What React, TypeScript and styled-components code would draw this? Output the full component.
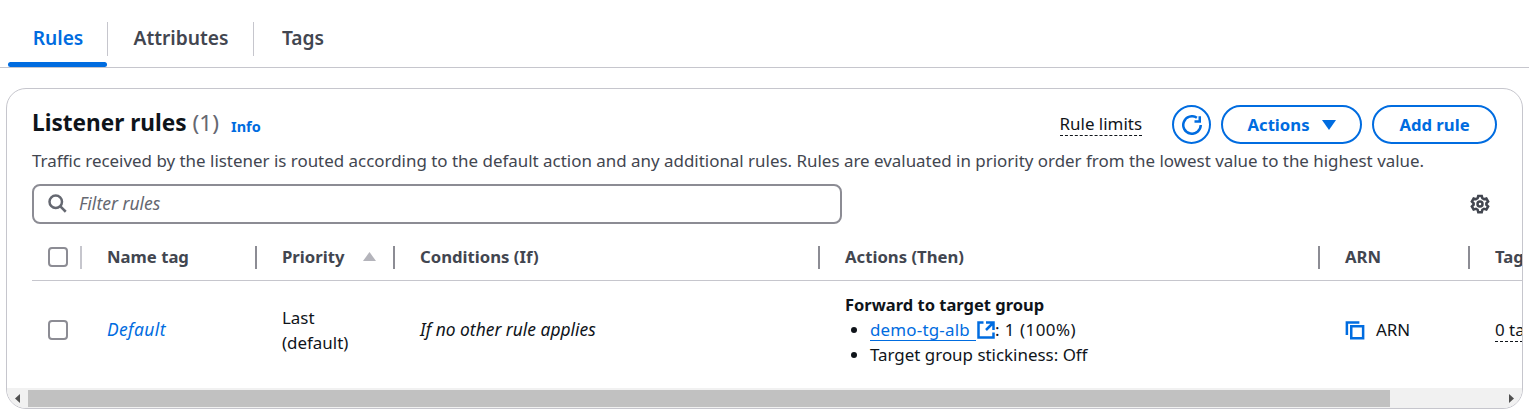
import styled, { createGlobalStyle } from "styled-components";

const GlobalStyle = createGlobalStyle`
  html, body {
    margin: 0;
    padding: 0;
    background: #fff;
    overflow: hidden;
  }
  body {
    font-family: "Noto Sans", "Open Sans", sans-serif;
    font-size: 16.93px;
    line-height: 25px;
    color: #0f141a;
  }
`;

const BLUE = "#006ce0";

// tabs
const TabBar = styled.div`
  display: flex;
  height: 68px;
  padding: 22px 0 0 8px;
  box-sizing: border-box;
  border-bottom: 1px solid #c6c6cd;
`;

const Tab = styled.div<{ $active?: boolean; $width: number; $divider?: boolean }>`
  position: relative;
  width: ${({ $width }) => $width}px;
  height: 45px;
  box-sizing: border-box;
  padding-top: 3px;
  font-size: 19.2px;
  font-weight: 600;
  line-height: 26px;
  text-align: center;
  color: ${({ $active }) => ($active ? BLUE : "#424650")};
  &::before {
    content: "";
    display: ${({ $divider }) => ($divider ? "block" : "none")};
    position: absolute;
    right: 0;
    top: 0;
    width: 1px;
    height: 34px;
    background: #c6c6cd;
  }
  &::after {
    content: "";
    display: ${({ $active }) => ($active ? "block" : "none")};
    position: absolute;
    left: 0;
    right: 1px;
    bottom: 0;
    height: 5px;
    border-radius: 3px;
    background: ${BLUE};
  }
`;

// card
const Card = styled.section`
  margin: 20px 0 0 6px;
  width: 1517px;
  height: 321px;
  box-sizing: border-box;
  border: 1px solid #c6c6cd;
  border-radius: 20px;
  overflow: hidden;
  display: flex;
  flex-direction: column;
`;

const Header = styled.div`
  padding: 16px 25px 0 25px;
`;

const TitleRow = styled.div`
  display: flex;
  align-items: center;
  height: 39px;
`;

const Title = styled.h2`
  margin: -3px 0 0;
  font-size: 22.6px;
  font-weight: 700;
  line-height: 36px;
`;

const Count = styled.span`
  font-weight: 400;
  color: #656871;
  margin-left: 6px;
`;

const InfoLink = styled.span`
  margin-left: 12px;
  margin-top: 3px;
  font-size: 14.5px;
  font-weight: 700;
  color: ${BLUE};
`;

const Spacer = styled.div`
  flex: 1;
`;

const DashedText = styled.span`
  border-bottom: 1px dashed #0f141a;
  line-height: 22px;
`;

const RuleLimits = styled(DashedText)`
  margin-right: 20px;
`;

const PillButton = styled.div<{ $width: number }>`
  display: flex;
  align-items: center;
  justify-content: center;
  gap: 12px;
  width: ${({ $width }) => $width}px;
  height: 39px;
  margin-left: 10px;
  box-sizing: border-box;
  border: 2px solid ${BLUE};
  border-radius: 20px;
  color: ${BLUE};
  font-size: 16.7px;
  font-weight: 700;
`;

const Description = styled.p`
  margin: 4px 0 0;
  color: #424650;
  line-height: 26px;
  white-space: nowrap;
`;

const FilterRow = styled.div`
  display: flex;
  align-items: center;
  justify-content: space-between;
  margin-top: 10px;
  padding-right: 7px;
`;

const FilterBox = styled.div`
  display: flex;
  align-items: center;
  gap: 12px;
  width: 810px;
  height: 40px;
  box-sizing: border-box;
  border: 2px solid #8c8c94;
  border-radius: 8px;
  padding: 0 0 2px 13px;
  color: #656871;
  font-size: 17.5px;
  font-style: italic;
`;

const TableWrap = styled.div`
  flex: 1;
  margin-left: 25px;
  overflow: hidden;
`;

const Table = styled.table`
  border-collapse: collapse;
  table-layout: fixed;
  width: 1690px;
`;

const HeadCell = styled.th<{ $divider?: string }>`
  position: relative;
  height: 56px;
  padding: 10px 0 0 25px;
  box-sizing: border-box;
  text-align: left;
  font-size: 16.7px;
  font-weight: 700;
  color: #424650;
  border-bottom: 1px solid #c6c6cd;
  &::after {
    content: "";
    position: absolute;
    right: 0;
    top: 22px;
    width: 2px;
    height: 23px;
    background: ${({ $divider }) => $divider ?? "#8c8c94"};
  }
`;

const CheckHead = styled(HeadCell)`
  padding-left: 16px;
`;

const BodyCell = styled.td`
  height: 107px;
  padding: 0 0 8px 25px;
  box-sizing: border-box;
  vertical-align: middle;
`;

const CheckCell = styled(BodyCell)`
  padding-left: 16px;
`;

const Checkbox = styled.div`
  width: 20px;
  height: 20px;
  box-sizing: border-box;
  border: 2px solid #8c8c94;
  border-radius: 4px;
`;

const SortLabel = styled.div`
  display: flex;
  align-items: center;
  gap: 19px;
`;

const ItalicLink = styled.span`
  font-size: 17.4px;
  font-style: italic;
  letter-spacing: 0.4px;
  color: ${BLUE};
`;

const Italic = styled.span`
  font-size: 17.4px;
  font-style: italic;
`;

const Strong = styled.div`
  font-size: 16.5px;
  font-weight: 700;
`;

const ActionList = styled.ul`
  margin: 0;
  padding-left: 25px;
`;

const TargetLink = styled.span`
  color: ${BLUE};
  border-bottom: 1px solid ${BLUE};
  padding-right: 6px;
  line-height: 20px;
  display: inline-block;
  letter-spacing: 0.2px;
`;

const LinkIcon = styled.span`
  display: inline-block;
  color: ${BLUE};
  margin-right: -1px;
  vertical-align: -4px;
`;

const Weight = styled.span`
  letter-spacing: 0.5px;
`;

const ArnCell = styled.div`
  display: flex;
  align-items: center;
  gap: 11px;
`;

const TagCount = styled(DashedText)`
  white-space: nowrap;
`;

// scrollbar
const ScrollTrack = styled.div`
  display: flex;
  align-items: center;
  height: 20px;
  background: #f1f1f1;
  flex-shrink: 0;
`;

const ScrollArrow = styled.div`
  width: 21px;
  height: 18px;
  display: flex;
  align-items: center;
  justify-content: center;
  flex-shrink: 0;
`;

const ScrollRest = styled.div`
  flex: 1;
`;

const ScrollThumb = styled.div`
  width: 1362px;
  height: 17px;
  background: #c1c1c1;
`;

const Icon = styled.svg<{ $size: number; $color?: string }>`
  display: block;
  flex-shrink: 0;
  width: ${({ $size }) => $size}px;
  height: ${({ $size }) => $size}px;
  fill: none;
  stroke: ${({ $color }) => $color ?? "currentColor"};
  stroke-width: 2;
`;

const SolidIcon = styled.svg`
  display: block;
  fill: currentColor;
`;

const SortCaret = styled(SolidIcon)`
  width: 13px;
  height: 9px;
  color: #b4b4bb;
`;

const DownCaret = styled(SolidIcon)`
  width: 14px;
  height: 10px;
`;

const ArrowGlyph = styled(SolidIcon)`
  width: 5px;
  height: 9px;
  color: #505050;
`;

const columns = [50, 175, 138, 425, 500, 150, 252];

const App = () => {
  return (
    <>
      <GlobalStyle />
      <TabBar>
        <Tab $active $width={100} $divider>Rules</Tab>
        <Tab $width={146} $divider>Attributes</Tab>
        <Tab $width={98}>Tags</Tab>
      </TabBar>
      <Card>
        <Header>
          <TitleRow>
            <Title>
              Listener rules<Count>(1)</Count>
            </Title>
            <InfoLink>Info</InfoLink>
            <Spacer />
            <RuleLimits>Rule limits</RuleLimits>
            <PillButton $width={39}>
              <Icon $size={20} viewBox="0 0 16 16">
                <path d="M15 8a7 7 0 1 1-3.1-5.8" />
                <path d="M14.2 1v4.2H10" />
              </Icon>
            </PillButton>
            <PillButton $width={141}>
              Actions
              <DownCaret viewBox="0 0 14 10">
                <path d="M0 0h14L7 10z" />
              </DownCaret>
            </PillButton>
            <PillButton $width={125}>Add rule</PillButton>
          </TitleRow>
          <Description>
            Traffic received by the listener is routed according to the default action and any additional rules. Rules are evaluated in priority order from the lowest value to the highest value.
          </Description>
          <FilterRow>
            <FilterBox>
              <Icon $size={20} $color="#656871" viewBox="0 0 16 16">
                <circle cx="7" cy="7" r="5" />
                <path d="m15 15-4.5-4.5" />
              </Icon>
              Filter rules
            </FilterBox>
            <Icon $size={20} $color="#424650" viewBox="0 0 16 16">
              <path d="M6.6 1.5h2.8l.5 1.9 1.3.7 1.9-.5 1.4 2.4-1.4 1.4v1.2l1.4 1.4-1.4 2.4-1.9-.5-1.3.7-.5 1.9H6.6l-.5-1.9-1.3-.7-1.9.5-1.4-2.4 1.4-1.4V7.4L1.5 6l1.4-2.4 1.9.5 1.3-.7z" />
              <circle cx="8" cy="8" r="2" />
            </Icon>
          </FilterRow>
        </Header>
        <TableWrap>
          <Table>
            <colgroup>
              {columns.map((width, i) => (
                <col key={i} width={width} />
              ))}
            </colgroup>
            <thead>
              <tr>
                <CheckHead $divider="#c6c6cd">
                  <Checkbox />
                </CheckHead>
                <HeadCell>Name tag</HeadCell>
                <HeadCell>
                  <SortLabel>
                    Priority
                    <SortCaret viewBox="0 0 13 9">
                      <path d="M6.5 0 13 9H0z" />
                    </SortCaret>
                  </SortLabel>
                </HeadCell>
                <HeadCell>Conditions (If)</HeadCell>
                <HeadCell>Actions (Then)</HeadCell>
                <HeadCell>ARN</HeadCell>
                <HeadCell $divider="transparent">Tags</HeadCell>
              </tr>
            </thead>
            <tbody>
              <tr>
                <CheckCell>
                  <Checkbox />
                </CheckCell>
                <BodyCell>
                  <ItalicLink>Default</ItalicLink>
                </BodyCell>
                <BodyCell>
                  Last
                  <br />
                  (default)
                </BodyCell>
                <BodyCell>
                  <Italic>If no other rule applies</Italic>
                </BodyCell>
                <BodyCell>
                  <Strong>Forward to target group</Strong>
                  <ActionList>
                    <li>
                      <TargetLink>demo-tg-alb</TargetLink>
                      <LinkIcon>
                        <Icon $size={20} viewBox="0 0 16 16">
                          <path d="M14 8V2H8M14 2 8 8M6 2H2v12h12v-4" />
                        </Icon>
                      </LinkIcon>
                      <Weight>: 1 (100%)</Weight>
                    </li>
                    <li>Target group stickiness: Off</li>
                  </ActionList>
                </BodyCell>
                <BodyCell>
                  <ArnCell>
                    <Icon $size={20} $color={BLUE} viewBox="0 0 16 16">
                      <path d="M1.5 12V2h10" />
                      <path d="M5 5h9.5v9.5H5z" />
                    </Icon>
                    ARN
                  </ArnCell>
                </BodyCell>
                <BodyCell>
                  <TagCount>0 tags</TagCount>
                </BodyCell>
              </tr>
            </tbody>
          </Table>
        </TableWrap>
        <ScrollTrack>
          <ScrollArrow>
            <ArrowGlyph viewBox="0 0 5 9">
              <path d="M5 0v9L0 4.5z" />
            </ArrowGlyph>
          </ScrollArrow>
          <ScrollThumb />
          <ScrollRest />
          <ScrollArrow>
            <ArrowGlyph viewBox="0 0 5 9">
              <path d="M0 0v9l5-4.5z" />
            </ArrowGlyph>
          </ScrollArrow>
        </ScrollTrack>
      </Card>
    </>
  );
};

export default App;
